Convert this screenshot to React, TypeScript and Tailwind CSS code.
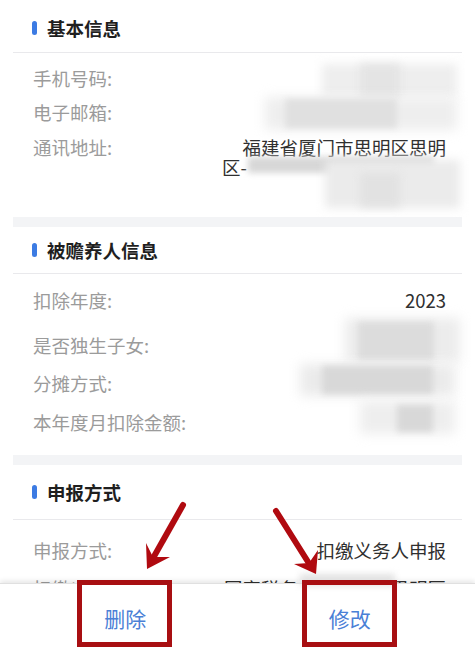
import React from "react";

const FONT =
  "font-['Noto_Sans_CJK_SC','Noto_Sans','Liberation_Sans',sans-serif]";

function Header({ title, h }: { title: string; h: string }) {
  return (
    <div className={`${h} flex items-center gap-[10px] pl-[19px] border-b border-[#e9e9ec]`}>
      <span className="w-[5px] h-[14px] rounded-full bg-[#3c7be3]" />
      <span className="text-[18.5px] font-bold text-[#1f1f1f] leading-none">{title}</span>
    </div>
  );
}

function Row({
  label,
  value,
  cls = "",
}: {
  label: string;
  value?: React.ReactNode;
  cls?: string;
}) {
  return (
    <div className={`flex justify-between items-start pl-[20px] pr-[16px] text-[18.5px] leading-[24px] ${cls}`}>
      <span className="text-[#9b9b9b] whitespace-nowrap">{label}</span>
      <span className="text-[#2f2f2f]">{value}</span>
    </div>
  );
}

type B = { l: number; t: number; w: number; h: number; c: string; b?: number };
const blurs: B[] = [
  // phone
  { l: 322, t: 64, w: 135, h: 33, c: "#eeeeee", b: 5 },
  { l: 360, t: 64, w: 40, h: 34, c: "#e4e4e4", b: 4 },
  // email
  { l: 265, t: 97, w: 192, h: 33, c: "#eeeeee", b: 6 },
  { l: 285, t: 99, w: 112, h: 29, c: "#e0e0e0", b: 3 },
  // address
  { l: 248, t: 157, w: 186, h: 16, c: "#d7d7d7", b: 3 },
  { l: 325, t: 160, w: 135, h: 48, c: "#ebebeb", b: 5 },
  { l: 360, t: 173, w: 40, h: 34, c: "#e2e2e2", b: 4 },
  // only child
  { l: 345, t: 318, w: 115, h: 44, c: "#ececec", b: 6 },
  { l: 358, t: 322, w: 76, h: 38, c: "#dcdcdc", b: 3 },
  // split
  { l: 300, t: 364, w: 155, h: 32, c: "#ebebeb", b: 6 },
  { l: 322, t: 366, w: 111, h: 28, c: "#d8d8d8", b: 3 },
  // monthly amount
  { l: 360, t: 401, w: 95, h: 33, c: "#eeeeee", b: 6 },
  { l: 397, t: 405, w: 36, h: 27, c: "#d8d8d8", b: 3 },
  // cut row
  { l: 300, t: 574, w: 95, h: 12, c: "#e2e2e2", b: 3 },
];

export default function App() {
  return (
    <div className={`relative w-[475px] h-[653px] bg-white overflow-hidden flex flex-col ${FONT}`}>
      <div className="flex-1 overflow-hidden px-[13px] flex flex-col">
        {/* Section 1 */}
        <div className="h-[217px] shrink-0 bg-white">
          <Header title="基本信息" h="h-[53px] pt-[4px]" />
          <div className="flex flex-col pt-[13px]">
            <Row label="手机号码:" />
            <Row label="电子邮箱:" cls="mt-[10px]" />
            <div className="flex justify-between pl-[20px] pr-[16px] text-[18.5px] leading-[20px] mt-[13px]">
              <span className="text-[#9b9b9b] leading-[24px] -mt-[2px]">通讯地址:</span>
              <div className="text-[#2f2f2f] w-[224px] flex flex-col">
                <span className="text-right whitespace-nowrap">福建省厦门市思明区思明</span>
                <span className="text-left">区-</span>
              </div>
            </div>
          </div>
        </div>
        <div className="h-[10px] shrink-0 bg-[#f3f4f6]" />
        {/* Section 2 */}
        <div className="h-[228px] shrink-0 bg-white">
          <Header title="被赡养人信息" h="h-[47px]" />
          <div className="flex flex-col">
            <Row label="扣除年度:" value="2023" cls="mt-[14px]" />
            <Row label="是否独生子女:" cls="mt-[21px]" />
            <Row label="分摊方式:" cls="mt-[14px]" />
            <Row label="本年度月扣除金额:" cls="mt-[15px]" />
          </div>
        </div>
        <div className="h-[10px] shrink-0 bg-[#f3f4f6]" />
        {/* Section 3 */}
        <div className="flex-1 bg-white">
          <Header title="申报方式" h="h-[55px]" />
          <div className="flex flex-col">
            <Row label="申报方式:" value="扣缴义务人申报" cls="mt-[18px]" />
            <Row label="扣缴义务人:" value="国家税务总局厦门市思明区" cls="mt-[14px]" />
          </div>
        </div>
      </div>

      {/* bottom bar */}
      <div className="relative h-[70px] shrink-0 bg-white shadow-[0_-2px_5px_rgba(0,0,0,0.10)] border-t border-[#e0e0e0]">
        <div className="mx-[13px] h-full grid grid-cols-2">
          <div className="flex items-center justify-center text-[21px] text-[#4a80d6]">删除</div>
          <div className="flex items-center justify-center text-[21px] text-[#4a80d6]">修改</div>
        </div>
      </div>

      {/* redaction blurs */}
      {blurs.map((b, i) => (
        <div
          key={i}
          className="absolute pointer-events-none"
          style={{
            left: b.l,
            top: b.t,
            width: b.w,
            height: b.h,
            background: b.c,
            filter: `blur(${b.b ?? 4}px)`,
          }}
        />
      ))}

      {/* annotation boxes */}
      <div className="absolute left-[77px] top-[580px] w-[95px] h-[67px] border-[5px] border-[#a80f12]" />
      <div className="absolute left-[302px] top-[580px] w-[95px] h-[67px] border-[5px] border-[#a80f12]" />

      {/* annotation arrows */}
      <svg className="absolute inset-0 pointer-events-none" width="475" height="653" viewBox="0 0 475 653">
        <line x1="183" y1="505" x2="152" y2="560" stroke="#b00a10" strokeWidth="6" strokeLinecap="round" />
        <polygon points="147,569 146,543 153,557 170,557" fill="#b00a10" />
        <line x1="276" y1="511" x2="310" y2="565" stroke="#b00a10" strokeWidth="6" strokeLinecap="round" />
        <polygon points="316,574 294,564 309,563 318,550" fill="#b00a10" />
      </svg>
    </div>
  );
}
